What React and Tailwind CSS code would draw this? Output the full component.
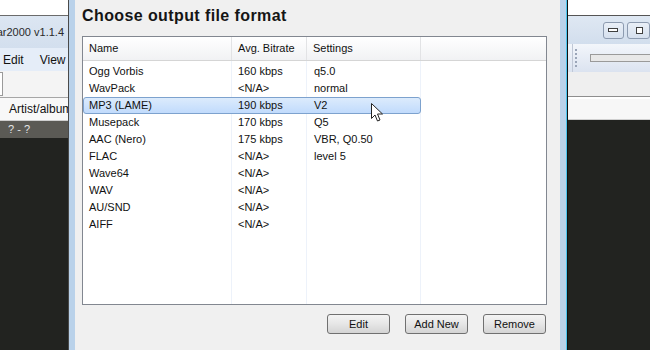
import React from "react";

const rows = [
  ["Ogg Vorbis", "160 kbps", "q5.0"],
  ["WavPack", "<N/A>", "normal"],
  ["MP3 (LAME)", "190 kbps", "V2"],
  ["Musepack", "170 kbps", "Q5"],
  ["AAC (Nero)", "175 kbps", "VBR, Q0.50"],
  ["FLAC", "<N/A>", "level 5"],
  ["Wave64", "<N/A>", ""],
  ["WAV", "<N/A>", ""],
  ["AU/SND", "<N/A>", ""],
  ["AIFF", "<N/A>", ""],
];

function LeftApp() {
  return (
    <div className="w-[68px] h-[350px] flex flex-col overflow-hidden shrink-0">
      <div className="h-[15px] bg-white" />
      <div className="h-px bg-[#6b6b6b]" />
      <div className="h-[32px] bg-gradient-to-b from-[#dce6f2] to-[#d3dfee] flex items-center justify-end pr-[4px]">
        <span className="whitespace-nowrap text-[11px] text-[#2a2a2a]">foobar2000 v1.1.4</span>
      </div>
      <div className="h-[23px] bg-[#e5edf8] flex items-center gap-[16px] pl-[3px] text-[12px] text-[#111]">
        <span>Edit</span>
        <span>View</span>
      </div>
      <div className="h-[26px] bg-[#f4f4f4] flex items-center">
        <div className="h-[24px] w-[3px] bg-white border border-l-0 border-[#9a9a9a]" />
      </div>
      <div className="h-px bg-[#a6a6a6]" />
      <div className="h-[22px] bg-[#f8f8f8] flex items-center text-[12px] text-[#111]">
        <div className="w-px h-full bg-[#d0d0d0] ml-[3px]" />
        <span className="ml-[6px] whitespace-nowrap">Artist/album</span>
      </div>
      <div className="h-px bg-[#cfcfcf]" />
      <div className="h-[17px] bg-[#5b5a55] flex items-center pl-[8px] text-[11px] text-[#e6e6e6]">? - ?</div>
      <div className="flex-1 bg-[#222320]" />
    </div>
  );
}

function RightApp() {
  return (
    <div className="w-[82px] h-[350px] flex flex-col overflow-hidden shrink-0">
      <div className="h-[15px] bg-white" />
      <div className="h-px bg-[#555]" />
      <div className="h-[28px] bg-gradient-to-b from-[#dfe8f3] to-[#d2deed] flex items-center pl-[35px] gap-[3px]">
        <div className="w-[30px] h-[17px] rounded-[3px] border border-[#8d9bb0] bg-gradient-to-b from-[#e9eff7] to-[#d6e0ee] flex items-center justify-center">
          <div className="w-[10px] h-[4px] border border-[#404040] bg-white" />
        </div>
        <div className="w-[30px] h-[17px] rounded-[3px] border border-[#8d9bb0] bg-gradient-to-b from-[#e9eff7] to-[#d6e0ee] flex items-center pl-[8px]">
          <div className="w-[7px] h-[7px] border border-[#404040] bg-white" />
        </div>
      </div>
      <div className="h-[28px] bg-gradient-to-b from-[#f3f6fb] to-[#dbe3f0] flex items-center">
        <div className="w-px h-full bg-[#c0c8d6] ml-[4px]" />
        <div className="ml-[2px] h-[20px] w-[3px] flex flex-col justify-between py-[1px]">
          <div className="h-[2px] w-[2px] bg-[#9aa5b8]" />
          <div className="h-[2px] w-[2px] bg-[#9aa5b8]" />
          <div className="h-[2px] w-[2px] bg-[#9aa5b8]" />
          <div className="h-[2px] w-[2px] bg-[#9aa5b8]" />
          <div className="h-[2px] w-[2px] bg-[#9aa5b8]" />
        </div>
        <div className="ml-[12px] h-[8px] flex-1 bg-[#e8e8e8] border border-r-0 border-[#9a9a9a]" />
      </div>
      <div className="h-[24px] bg-[#efefef]" />
      <div className="h-px bg-[#8e8e8e]" />
      <div className="h-[2px] bg-white" />
      <div className="h-[20px] bg-[#f7f7f7]" />
      <div className="h-px bg-[#cfcfcf]" />
      <div className="flex-1 bg-[#222320]" />
    </div>
  );
}

function Cursor() {
  return (
    <svg className="absolute left-[288px] top-[42px]" width="14" height="20" viewBox="0 0 14 20">
      <path d="M0.5 0.5 L0.5 15.5 L4 12 L6.5 18 L9 17 L6.5 11 L11.5 11 Z" fill="white" stroke="#222" strokeWidth="1" strokeLinejoin="round" />
    </svg>
  );
}

function Button({ children }) {
  return (
    <div className="w-[63px] h-[20px] rounded-[3px] border border-[#707070] bg-gradient-to-b from-[#f4f4f4] via-[#e6e6e6] to-[#d4d4d4] flex items-center justify-center text-[11px] text-[#111]">
      {children}
    </div>
  );
}

function Dialog() {
  return (
    <div className="w-[500px] h-[350px] flex shrink-0">
      <div className="w-px bg-[#4a4a4a]" />
      <div className="w-[6px] bg-[#bad2ea]" />
      <div className="flex-1 bg-[#f0f0f0] flex flex-col pl-[7px] pr-[13px]">
        <div className="h-[36px] pt-[4px] text-[16px] tracking-[0.4px] font-bold text-[#151515]">
          Choose output file format
        </div>
        <div className="h-[269px] border border-[#828790] bg-white flex flex-col">
          <div className="h-[24px] flex bg-gradient-to-b from-white to-[#f1f2f4] border-b border-[#d5d5d5] text-[11px] text-[#111]">
            <div className="w-[149px] flex items-center pl-[6px] border-r border-[#e2e3e5]">Name</div>
            <div className="w-[75px] flex items-center pl-[6px] border-r border-[#e2e3e5]">Avg. Bitrate</div>
            <div className="w-[114px] flex items-center pl-[6px] border-r border-[#e2e3e5]">Settings</div>
            <div className="flex-1" />
          </div>
          <div className="relative flex-1 pt-[2px]">
            <div className="absolute inset-0 flex pointer-events-none">
              <div className="w-[149px] border-r border-[#edf2fa]" />
              <div className="w-[75px] border-r border-[#edf2fa]" />
              <div className="w-[114px] border-r border-[#edf2fa]" />
            </div>
            <div className="relative flex flex-col">
              {rows.map(([n, b, s], i) => (
                <div
                  key={i}
                  className={
                    i === 2
                      ? "w-[338px] h-[17px] flex items-center text-[11px] text-[#111] rounded-[3px] border border-[#7da2ce] bg-gradient-to-b from-[#dcebfc] to-[#c1dbfc]"
                      : "w-[338px] h-[17px] flex items-center text-[11px] text-[#111] border border-transparent"
                  }
                >
                  <div className="w-[149px] pl-[5px] whitespace-nowrap">{n}</div>
                  <div className="w-[75px] pl-[5px] whitespace-nowrap">{b}</div>
                  <div className="w-[112px] pl-[6px] whitespace-nowrap">{s}</div>
                </div>
              ))}
            </div>
            <Cursor />
          </div>
        </div>
        <div className="flex justify-end gap-[15px] pt-[9px] pr-px">
          <Button>Edit</Button>
          <Button>Add New</Button>
          <Button>Remove</Button>
        </div>
      </div>
      <div className="w-[6px] bg-[#bad2ea]" />
      <div className="w-px bg-[#4cc6ee]" />
      <div className="w-px bg-[#111]" />
    </div>
  );
}

export default function App() {
  return (
    <div className="w-[650px] h-[350px] flex overflow-hidden" style={{ fontFamily: '"Liberation Sans", Arial, sans-serif' }}>
      <LeftApp />
      <Dialog />
      <RightApp />
    </div>
  );
}
